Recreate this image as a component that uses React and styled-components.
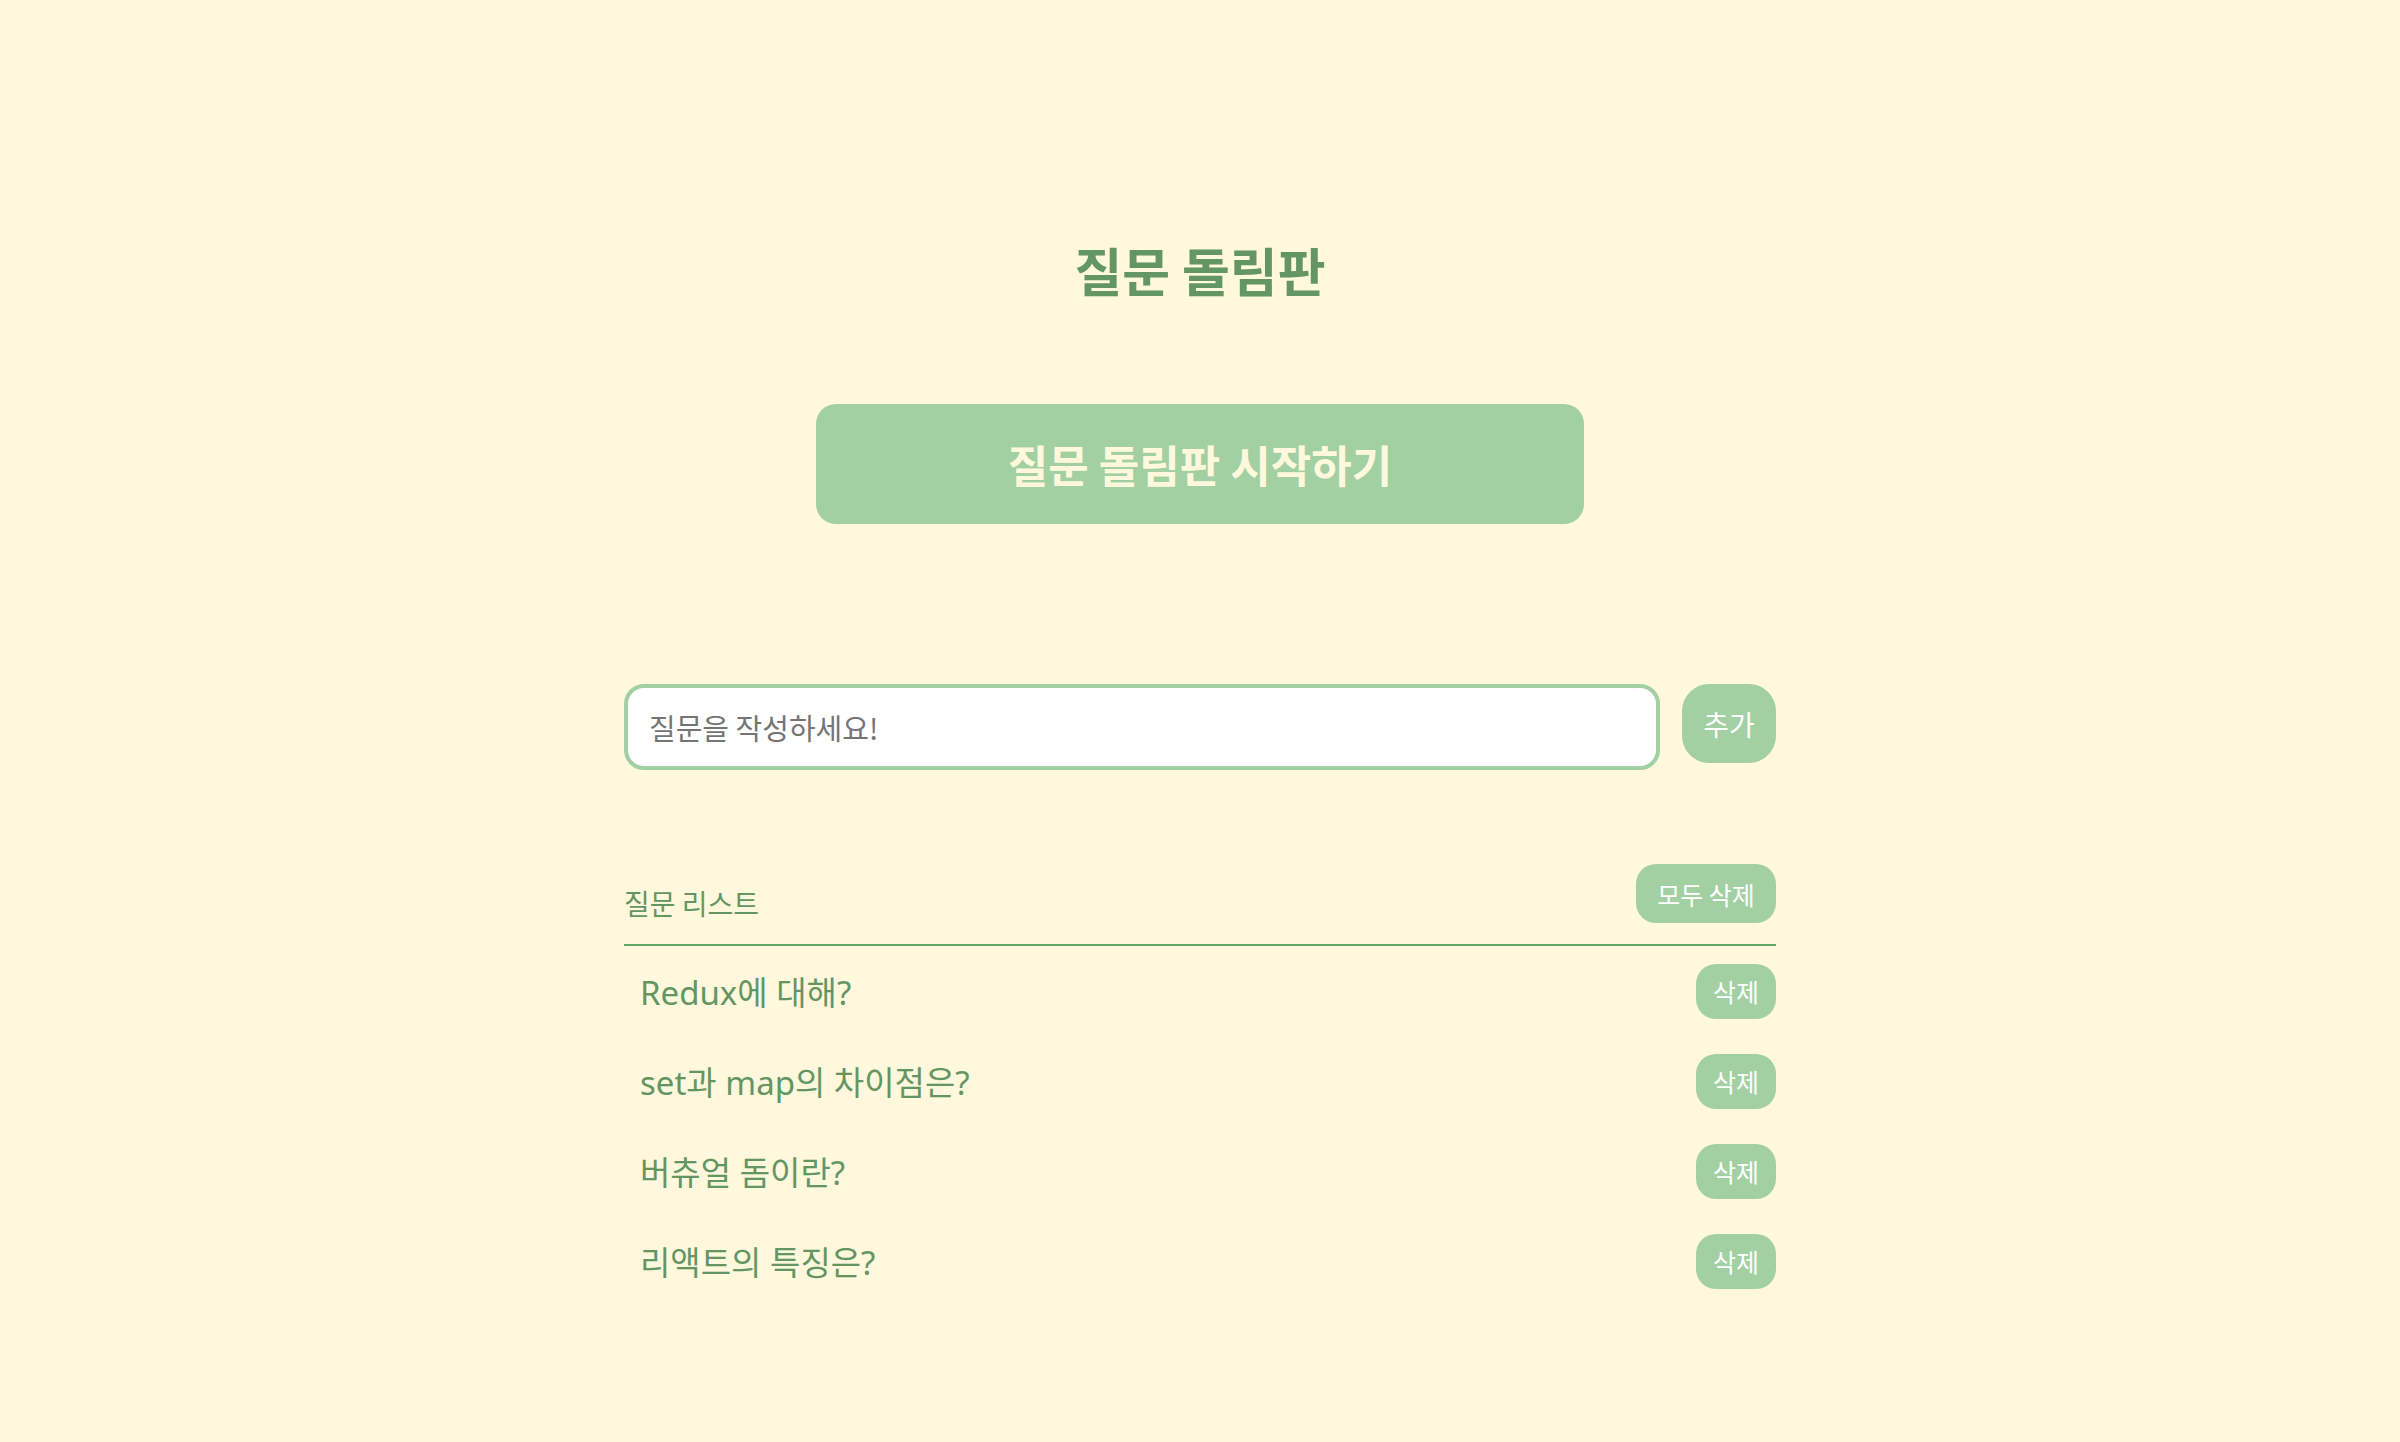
import React from "react";
import styled, { createGlobalStyle } from "styled-components";

const GlobalStyle = createGlobalStyle`
  html, body {
    margin: 0;
    padding: 0;
    background: #fff8dc;
  }
  body {
    font-family: "Noto Sans", "Noto Sans CJK KR", sans-serif;
  }
  * { box-sizing: border-box; }
`;

const Page = styled.div`
  min-height: 1442px;
  background: #fff8dc;
  padding-top: 244px;
  display: flex;
  flex-direction: column;
  align-items: center;
`;

const Title = styled.h1`
  margin: 0 0 108px;
  font-size: 52px;
  line-height: 1;
  font-weight: 700;
  color: #649664;
  font-family: "Noto Sans CJK KR", sans-serif;
`;

const StartButton = styled.button`
  width: 768px;
  height: 120px;
  border: none;
  border-radius: 20px;
  background: #a3d0a3;
  color: #fff8dc;
  font-family: "Noto Sans CJK KR", sans-serif;
  font-size: 44px;
  font-weight: 700;
  cursor: pointer;
`;

const Container = styled.div`
  width: 1152px;
  margin-top: 160px;
  display: flex;
  flex-direction: column;
`;

const InputRow = styled.div`
  display: flex;
  align-items: flex-start;
  gap: 22px;
`;

const QuestionInput = styled.input`
  flex: 1;
  height: 86px;
  border: 4px solid #a3d0a3;
  border-radius: 20px;
  background: #fff;
  padding: 0 21px;
  font-family: "Noto Sans CJK KR", sans-serif;
  font-size: 29px;
  color: #333;
  outline: none;
  &::placeholder {
    color: #757575;
  }
`;

const PillButton = styled.button`
  border: none;
  background: #a3d0a3;
  color: #fff;
  font-family: "Noto Sans CJK KR", sans-serif;
  font-size: ${(p) => p.$size}px;
  height: ${(p) => p.$h}px;
  width: ${(p) => p.$w}px;
  border-radius: ${(p) => p.$r}px;
  padding: 0;
  flex: none;
  cursor: pointer;
`;

const ListHeader = styled.div`
  margin-top: 94px;
  display: flex;
  justify-content: space-between;
  align-items: flex-end;
  padding-bottom: 21px;
  border-bottom: 2px solid #62a562;
`;

const ListTitle = styled.h2`
  margin: 0 0 6px;
  font-size: 28px;
  line-height: 1;
  font-weight: 400;
  color: #649664;
  font-family: "Noto Sans CJK KR", sans-serif;
`;

const List = styled.ul`
  list-style: none;
  margin: 0;
  padding: 0;
`;

const Item = styled.li`
  height: 90px;
  display: flex;
  align-items: center;
  justify-content: space-between;
  padding-left: 16px;
`;

const ItemText = styled.span`
  font-size: 33px;
  color: #649664;
`;

const questions = [
  "Redux에 대해?",
  "set과 map의 차이점은?",
  "버츄얼 돔이란?",
  "리액트의 특징은?",
];

export default function App() {
  return (
    <>
      <GlobalStyle />
      <Page>
        <Title>질문 돌림판</Title>
        <StartButton>질문 돌림판 시작하기</StartButton>
        <Container>
          <InputRow>
            <QuestionInput placeholder="질문을 작성하세요!" />
            <PillButton $size={28} $h={79} $w={94} $r={27}>
              추가
            </PillButton>
          </InputRow>
          <ListHeader>
            <ListTitle>질문 리스트</ListTitle>
            <PillButton $size={25} $h={59} $w={140} $r={20}>
              모두 삭제
            </PillButton>
          </ListHeader>
          <List>
            {questions.map((q) => (
              <Item key={q}>
                <ItemText>{q}</ItemText>
                <PillButton $size={25} $h={55} $w={80} $r={20}>
                  삭제
                </PillButton>
              </Item>
            ))}
          </List>
        </Container>
      </Page>
    </>
  );
}
